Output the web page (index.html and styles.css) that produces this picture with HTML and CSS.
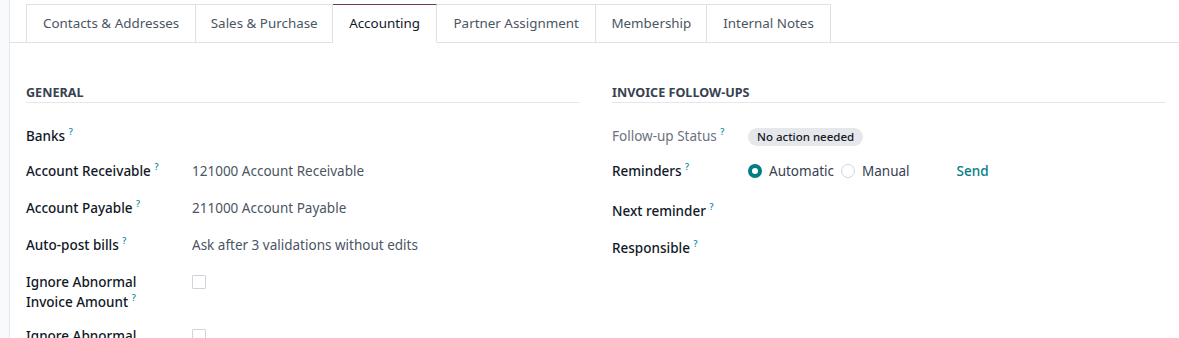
FILE: index.html
```html
<!DOCTYPE html>
<html>
<head>
<meta charset="utf-8">
<link rel="stylesheet" href="styles.css">
</head>
<body>
<div class="page">
  <div class="side"></div>
  <div class="main">
    <div class="tabs">
      <div class="tab">Contacts &amp; Addresses</div>
      <div class="tab">Sales &amp; Purchase</div>
      <div class="tab active">Accounting</div>
      <div class="tab">Partner Assignment</div>
      <div class="tab">Membership</div>
      <div class="tab">Internal Notes</div>
    </div>
    <div class="content">
      <div class="group">
        <div class="gtitle">GENERAL</div>
        <div class="rows left">
          <div class="row first"><div class="label">Banks <sup>?</sup></div><div class="value"></div></div>
          <div class="row"><div class="label">Account Receivable <sup>?</sup></div><div class="value">121000 Account Receivable</div></div>
          <div class="row"><div class="label">Account Payable <sup>?</sup></div><div class="value">211000 Account Payable</div></div>
          <div class="row"><div class="label">Auto-post bills <sup>?</sup></div><div class="value">Ask after 3 validations without edits</div></div>
          <div class="row double"><div class="label">Ignore Abnormal Invoice Amount <sup>?</sup></div><div class="value"><span class="check"></span></div></div>
          <div class="row"><div class="label">Ignore Abnormal Invoice Date <sup>?</sup></div><div class="value"><span class="check"></span></div></div>
        </div>
      </div>
      <div class="group">
        <div class="gtitle">INVOICE FOLLOW-UPS</div>
        <div class="rows right">
          <div class="row first"><div class="label muted">Follow-up Status <sup>?</sup></div><div class="value"><span class="badge">No action needed</span></div></div>
          <div class="row tall"><div class="label">Reminders <sup>?</sup></div>
            <div class="value radios">
              <span class="radio on"></span><span class="rlabel">Automatic</span>
              <span class="radio"></span><span class="rlabel">Manual</span>
              <span class="send">Send</span>
            </div>
          </div>
          <div class="row"><div class="label">Next reminder <sup>?</sup></div><div class="value"></div></div>
          <div class="row"><div class="label">Responsible <sup>?</sup></div><div class="value"></div></div>
        </div>
      </div>
    </div>
  </div>
</div>
</body>
</html>
```
FILE: styles.css
```css
* { box-sizing: border-box; }
html, body { margin: 0; padding: 0; background: #fff; }
body {
  font-family: "Noto Sans", "Open Sans", sans-serif;
  font-size: 14px;
  color: #374151;
  overflow: hidden;
  height: 338px;
}
.page { display: flex; height: 338px; }
.side { width: 10px; background: #f9fafb; border-right: 1px solid #e5e7eb; flex: none; }
.main { flex: 1; }
.tabs {
  display: flex;
  margin-top: 4px;
  padding-left: 16px;
  border-bottom: 1px solid #dee2e6;
  height: 39px;
}
.tab {
  height: 39px;
  padding: 0 16px 2px;
  border: 1px solid #dee2e6;
  border-left-width: 0;
  display: flex;
  align-items: center;
  color: #4b5563;
  background: #fff;
  margin-bottom: -1px;
  border-bottom-color: #dee2e6;
  font-size: 13.4px;
}
.tab:first-child { border-left-width: 1px; }
.tab:nth-child(2) { padding: 0 14.5px 2px; }
.tab:nth-child(4) { padding: 0 16.5px 2px; }
.tab:nth-child(5) { padding: 0 15px 2px; }
.tab.active {
  border-top: 1px solid #71385f;
  border-bottom-color: #fff;
  color: #111827;
}
.content {
  display: flex;
  gap: 32px;
  padding: 40px 13px 0 16px;
}
.group { flex: 1; }
.gtitle {
  font-size: 12.6px;
  font-weight: 700;
  color: #374151;
  padding-bottom: 0;
  padding-top: 1px;
  border-bottom: 1px solid #e5e7eb;
  line-height: 18px;
}
.rows { padding-top: 23px; }
.row { display: flex; min-height: 37px; }
.row.first { min-height: 35px; }
.row.tall { min-height: 40px; }
.row.double { min-height: 54px; }
.label {
  width: 166px;
  flex: none;
  font-weight: 500;
  color: #111827;
  line-height: 20px;
  padding-right: 16px;
  font-size: 13.5px;
}
.right .label { width: 136px; }
.label.muted { color: #6b7280; font-weight: 400; }
.label sup { color: #0180a5; font-size: 9px; font-weight: 500; vertical-align: 6px; line-height: 0; }
.value { color: #4b5563; line-height: 20px; font-size: 13.5px; flex: 1; }
.check {
  display: inline-block;
  width: 14px; height: 14px;
  border: 1px solid #d1d5db;
  border-radius: 1px;
  vertical-align: -2px;
}
.badge {
  display: inline-block;
  background: #e5e7eb;
  color: #111827;
  font-size: 11.5px;
  font-weight: 500;
  line-height: 18px;
  padding: 0 9px;
  border-radius: 9px;
}
.radios { display: flex; align-items: center; height: 20px; }
.radio {
  width: 14px; height: 14px;
  border-radius: 50%;
  border: 1px solid #d1d5db;
  display: inline-block;
  flex: none;
}
.radio.on { border: 4px solid #017e84; background: #fff; }
.rlabel { margin-left: 7px; margin-right: 9px; color: #374151; }
.rlabel:nth-of-type(2) { margin-right: 7px; }
.send { margin-left: 38px; color: #017e84; font-weight: 500; }
```
